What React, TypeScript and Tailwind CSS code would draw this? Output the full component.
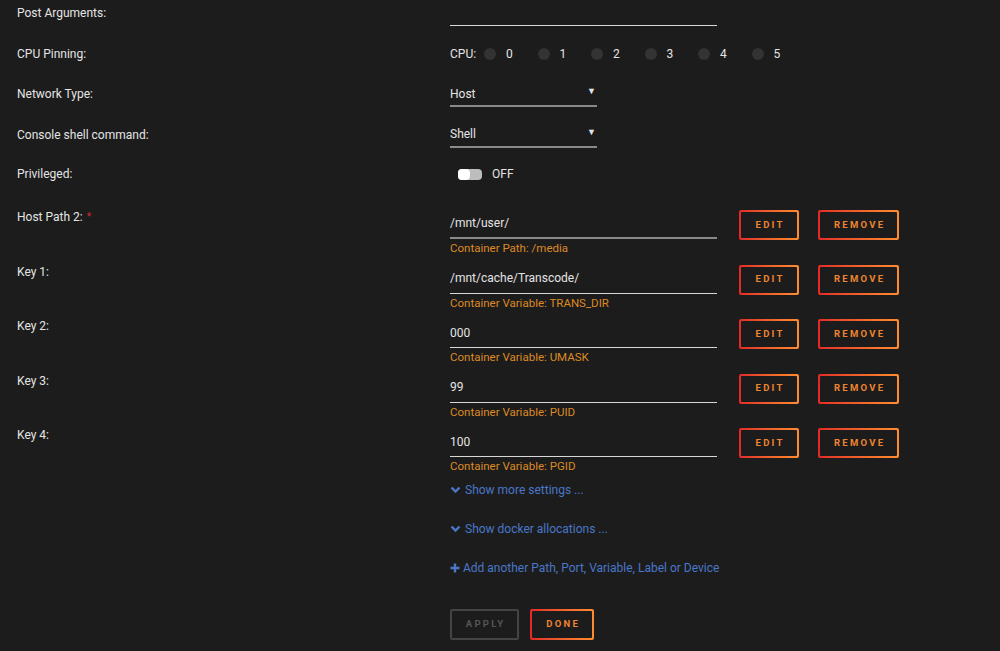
import React from "react";

const font = { fontFamily: "Roboto, 'Liberation Sans', sans-serif" };

function GradButton({ label, w }: { label: string; w: string }) {
  return (
    <div className={`bg-gradient-to-r from-[#e22828] to-[#ff8c2f] p-[2px] rounded-[2px] h-[30px] ${w}`}>
      <div className="bg-[#1c1c1c] h-full w-full flex items-center justify-center rounded-[1px]">
        <span className="text-[9.5px] font-bold tracking-[0.24em] text-[#ef8530] pl-[0.24em]">{label}</span>
      </div>
    </div>
  );
}

function Label({ children, req }: { children: React.ReactNode; req?: boolean }) {
  return (
    <div className="w-[433px] shrink-0 text-[12px] leading-[18px] text-[#e4e4e4]">
      {children}
      {req && <span className="text-[#d9262c] text-[10px] align-top ml-[4px]">*</span>}
    </div>
  );
}

function PathRow({ label, value, sub, req, grey }: { label: string; value: string; sub: string; req?: boolean; grey?: boolean }) {
  return (
    <div className="flex h-[54.5px]">
      <div className="pt-[4px]">
        <Label req={req}>{label}</Label>
      </div>
      <div className="flex pt-[6px]">
        <div className="w-[267px]">
          <div
            className={`h-[29px] flex items-center text-[12px] text-[#e4e4e4] ${
              grey ? "border-b-2 border-[#8a8a8a]" : "border-b border-[#d8d8d8]"
            }`}
          >
            <span className="pb-[1px]">{value}</span>
          </div>
          <div className="text-[11.5px] leading-[16px] text-[#dd8a24] mt-[1px]">{sub}</div>
        </div>
        <div className="ml-[22px] flex gap-[19px]">
          <GradButton label="EDIT" w="w-[60px]" />
          <GradButton label="REMOVE" w="w-[81px]" />
        </div>
      </div>
    </div>
  );
}

function Chevron() {
  return (
    <svg width="11" height="8" viewBox="0 0 11 8" className="mr-[4px]">
      <path d="M1.5 1.5 L5.5 5.5 L9.5 1.5" stroke="#4a77c9" strokeWidth="2.4" fill="none" />
    </svg>
  );
}

export default function App() {
  const cpus = [0, 1, 2, 3, 4, 5];
  return (
    <div style={font} className="w-[1000px] h-[651px] bg-[#1c1c1c] pl-[17px] overflow-hidden">
      {/* Post arguments */}
      <div className="flex h-[34px]">
        <div className="pt-[4px]">
          <Label>Post Arguments:</Label>
        </div>
        <div className="w-[267px] h-[26px] border-b border-[#d8d8d8]" />
      </div>

      {/* CPU pinning */}
      <div className="flex h-[40px] items-center">
        <Label>CPU Pinning:</Label>
        <div className="flex items-center text-[12px] text-[#e4e4e4]">
          <span className="mr-[8px]">CPU:</span>
          {cpus.map((c) => (
            <div key={c} className="flex items-center w-[53.5px]">
              <div className="w-[12px] h-[12px] rounded-full bg-[#333333]" />
              <span className="ml-[10px]">{c}</span>
            </div>
          ))}
        </div>
      </div>

      {/* Network type */}
      <div className="flex h-[40px] items-center">
        <Label>Network Type:</Label>
        <div className="w-[147px] h-[24px] mt-[2px] border-b-2 border-[#8a8a8a] flex items-center justify-between text-[12px] text-[#e4e4e4]">
          <span className="pb-[1px]">Host</span>
          <span className="text-[9px] pr-[1px] pb-[4px]">▼</span>
        </div>
      </div>

      {/* Console shell */}
      <div className="flex h-[41px] items-center">
        <Label>Console shell command:</Label>
        <div className="w-[147px] h-[24px] mt-[2px] border-b-2 border-[#8a8a8a] flex items-center justify-between text-[12px] text-[#e4e4e4]">
          <span className="pb-[1px]">Shell</span>
          <span className="text-[9px] pr-[1px] pb-[4px]">▼</span>
        </div>
      </div>

      {/* Privileged */}
      <div className="flex h-[38px] items-center">
        <Label>Privileged:</Label>
        <div className="flex items-center ml-[8px]">
          <div className="w-[24px] h-[11px] rounded-[4px] bg-[#bdbdbd] relative">
            <div className="absolute left-0 top-0 w-[12px] h-[11px] rounded-[4px] bg-white" />
          </div>
          <span className="ml-[10px] text-[12px] text-[#e4e4e4]">OFF</span>
        </div>
      </div>

      <div className="h-[11px]" />

      <PathRow label="Host Path 2:" value="/mnt/user/" sub="Container Path: /media" req grey />
      <PathRow label="Key 1:" value="/mnt/cache/Transcode/" sub="Container Variable: TRANS_DIR" />
      <PathRow label="Key 2:" value="000" sub="Container Variable: UMASK" />
      <PathRow label="Key 3:" value="99" sub="Container Variable: PUID" />
      <PathRow label="Key 4:" value="100" sub="Container Variable: PGID" />

      <div className="pl-[433px] text-[12px] leading-[18px] text-[#4a77c9]">
        <div className="mt-[4px] flex items-center h-[18px]">
          <Chevron />
          <span>Show more settings ...</span>
        </div>
        <div className="mt-[21px] flex items-center h-[18px]">
          <Chevron />
          <span>Show docker allocations ...</span>
        </div>
        <div className="mt-[21px] flex items-center h-[18px]">
          <svg width="10" height="10" viewBox="0 0 10 10" className="mr-[3px]">
            <path d="M5 0.5 V9.5 M0.5 5 H9.5" stroke="#4a77c9" strokeWidth="2.4" />
          </svg>
          <span>Add another Path, Port, Variable, Label or Device</span>
        </div>

        <div className="mt-[32px] flex gap-[11px]">
          <div className="w-[69px] h-[31px] border-2 border-[#444444] rounded-[2px] flex items-center justify-center">
            <span className="text-[9.5px] font-bold tracking-[0.24em] text-[#555555] pl-[0.24em]">APPLY</span>
          </div>
          <GradButton label="DONE" w="w-[64px] h-[31px]" />
        </div>
      </div>
    </div>
  );
}
